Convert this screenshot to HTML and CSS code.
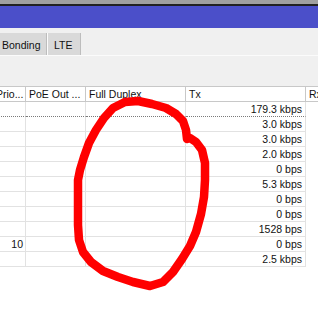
FILE: index.html
```html
<!DOCTYPE html>
<html>
<head>
<meta charset="utf-8">
<link rel="stylesheet" href="styles.css">
</head>
<body>
<div class="frame-top"></div>
<div class="titlebar"></div>
<div class="panel">
  <div class="tabs">
    <div class="tab tab-bonding">Bonding</div>
    <div class="tab tab-lte">LTE</div>
  </div>
  <div class="tabs-rule"></div>
  <div class="toolbar"></div>
</div>
<div class="table">
  <div class="row head">
    <div class="cell">Prio...</div>
    <div class="cell">PoE Out ...</div>
    <div class="cell">Full Duplex</div>
    <div class="cell">Tx</div>
    <div class="cell last">Rx</div>
  </div>
  <div class="row focus"><div class="cell"></div><div class="cell"></div><div class="cell"></div><div class="cell">179.3 kbps</div><div class="cell last"></div></div>
  <div class="row"><div class="cell"></div><div class="cell"></div><div class="cell"></div><div class="cell">3.0 kbps</div><div class="cell last"></div></div>
  <div class="row"><div class="cell"></div><div class="cell"></div><div class="cell"></div><div class="cell">3.0 kbps</div><div class="cell last"></div></div>
  <div class="row"><div class="cell"></div><div class="cell"></div><div class="cell"></div><div class="cell">2.0 kbps</div><div class="cell last"></div></div>
  <div class="row"><div class="cell"></div><div class="cell"></div><div class="cell"></div><div class="cell">0 bps</div><div class="cell last"></div></div>
  <div class="row"><div class="cell"></div><div class="cell"></div><div class="cell"></div><div class="cell">5.3 kbps</div><div class="cell last"></div></div>
  <div class="row"><div class="cell"></div><div class="cell"></div><div class="cell"></div><div class="cell">0 bps</div><div class="cell last"></div></div>
  <div class="row"><div class="cell"></div><div class="cell"></div><div class="cell"></div><div class="cell">0 bps</div><div class="cell last"></div></div>
  <div class="row"><div class="cell"></div><div class="cell"></div><div class="cell"></div><div class="cell">1528 bps</div><div class="cell last"></div></div>
  <div class="row"><div class="cell">10</div><div class="cell"></div><div class="cell"></div><div class="cell">0 bps</div><div class="cell last"></div></div>
  <div class="row"><div class="cell"></div><div class="cell"></div><div class="cell"></div><div class="cell">2.5 kbps</div><div class="cell last"></div></div>
</div>
<svg class="scribble" width="318" height="324" viewBox="0 0 318 324">
  <polyline fill="none" stroke="#ff0000" stroke-width="8.5" stroke-linejoin="round" stroke-linecap="round"
    points="187,139 186,130 183,121 176,114 166,108 152,104 138,101 125,102 113,108 104,118 96,130 89,143 84,157 80,170 78,180 78,200 78,225 79,240 83,252 91,262 103,271 118,277 133,282 150,286 163,282 173,272 182,259 190,246 196,232 201,214 204,197 205,180 205,163 202,150 196,142 190,138"/>
</svg>
</body>
</html>
```
FILE: styles.css
```css
html, body {
  margin: 0;
  padding: 0;
  background: #ffffff;
  overflow: hidden;
  width: 318px;
  height: 324px;
}
body {
  position: relative;
  font-family: "Liberation Sans", Arial, sans-serif;
  font-size: 10.5px;
  color: #111111;
}
.frame-top {
  height: 4px;
  background: #a0a0a0;
  border-bottom: 2px solid #222222;
}
.titlebar {
  height: 22px;
  background: #4b4fc9;
}
.panel {
  background: #f0f0f0;
  padding-top: 5px;
}
.tabs {
  display: flex;
  height: 22px;
  margin-left: -4px;
}
.tab {
  box-sizing: border-box;
  height: 22px;
  padding: 4px 0 0 6px;
  line-height: 17px;
  background: #d9d9d9;
  border-right: 1px solid #bdbdbd;
  white-space: nowrap;
}
.tab-bonding {
  width: 51px;
  margin-right: 1px;
}
.tab-lte {
  width: 33px;
}
.tabs .tab + .tab {
  box-shadow: -1px 0 0 #fbfbfb;
}
.tabs-rule {
  height: 1px;
  background: #fbfbfb;
}
.toolbar {
  height: 30px;
}
.table {
  margin-left: -7px;
}
.row {
  display: grid;
  grid-template-columns: 33px 60px 100px 120px 60px;
  height: 15px;
}
.cell {
  box-sizing: border-box;
  height: 15px;
  line-height: 14px;
  border-right: 1px solid #e2e2e2;
  border-bottom: 1px solid #e2e2e2;
  text-align: right;
  padding-right: 3px;
  white-space: nowrap;
  overflow: hidden;
}
.row .cell:first-child {
  padding-right: 2px;
}
.cell.last {
  border-right: none;
  border-bottom: none;
}
.head {
  height: 16px;
}
.head .cell {
  height: 16px;
  text-align: left;
  padding: 0 0 0 3px;
  border-top: 1px solid #c8c8c8;
  border-bottom: 1px solid #c8c8c8;
  border-right: 1px solid #c8c8c8;
  background: #ffffff;
}
.head .cell.last {
  border-right: none;
  border-bottom: 1px solid #c8c8c8;
}
.focus .cell {
  border-bottom: 1px dotted #7a7a7a;
}
.focus .cell.last {
  border-bottom: none;
}
.scribble {
  position: absolute;
  left: 0;
  top: 0;
  pointer-events: none;
}
```
